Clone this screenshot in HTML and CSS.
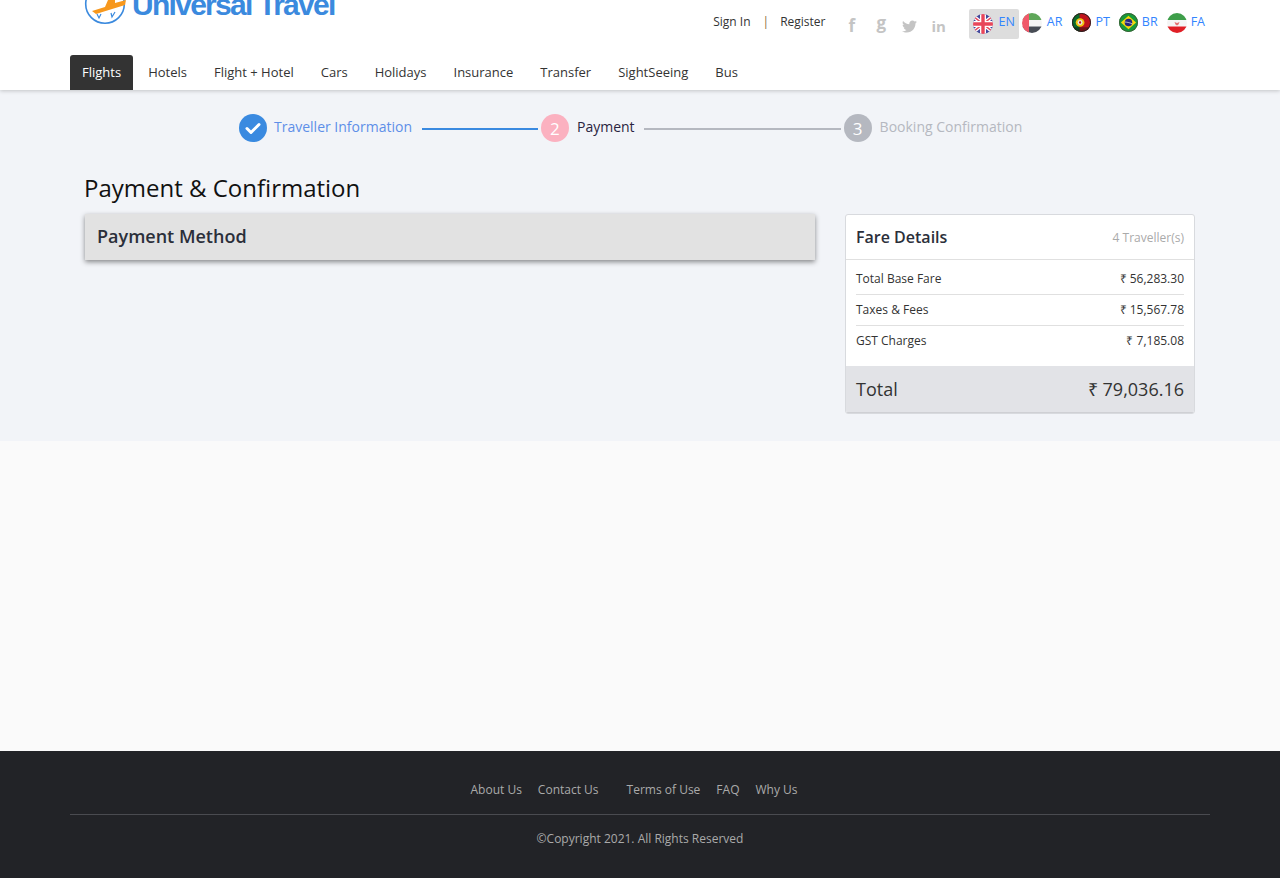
FILE: index.html
```html
<!DOCTYPE html>
<html lang="en">
<head>
<meta charset="utf-8">
<title>Universal Travel - Payment</title>
<link rel="stylesheet" href="styles.css">
</head>
<body>
<header class="header">
  <div class="container">
    <div class="top-row">
      <a class="logo" href="#">
        <svg class="logo-mark" width="42" height="42" viewBox="0 0 42 42">
          <circle cx="21" cy="21" r="19.3" fill="#fff" stroke="#3b8ade" stroke-width="1.6"/>
          <path d="M13 31l2 4 2-4M27 30l1 4 3-5M7 13l5-5M16 7l4-3" fill="none" stroke="#3b8ade" stroke-width="1.2"/>
          <path d="M8 28l13-4 3-7h7v3l11-3-1 5-29 9z" fill="#f7981d"/>
        </svg>
        <span class="logo-text">Universal Travel</span>
      </a>
      <div class="top-right">
        <div class="auth">
          <a href="#">Sign In</a>
          <span class="sep">|</span>
          <a href="#">Register</a>
        </div>
        <div class="social">
          <span class="soc soc-f">f</span>
          <span class="soc soc-g">g</span>
          <svg class="soc-tw" width="15" height="15" viewBox="0 0 512 512"><path fill="#c4c4c4" d="M459.37 151.716c.325 4.548.325 9.097.325 13.645 0 138.72-105.583 298.558-298.558 298.558-59.452 0-114.68-17.219-161.137-47.106 8.447.974 16.568 1.299 25.34 1.299 49.055 0 94.213-16.568 130.274-44.832-46.132-.975-84.792-31.188-98.112-72.772 6.498.974 12.995 1.624 19.818 1.624 9.421 0 18.843-1.3 27.614-3.573-48.081-9.747-84.143-51.98-84.143-102.985v-1.299c13.969 7.797 30.214 12.67 47.431 13.319-28.264-18.843-46.781-51.005-46.781-87.391 0-19.492 5.197-37.36 14.294-52.954 51.655 63.675 129.3 105.258 216.365 109.807-1.624-7.797-2.599-15.918-2.599-24.04 0-57.828 46.782-104.934 104.934-104.934 30.213 0 57.502 12.67 76.67 33.137 23.715-4.548 46.456-13.32 66.599-25.34-7.798 24.366-24.366 44.833-46.132 57.827 21.117-2.273 41.584-8.122 60.426-16.243-14.292 20.791-32.161 39.308-52.628 54.253z"/></svg>
          <span class="soc soc-in">in</span>
        </div>
        <div class="langs">
          <a class="lang lang-active" href="#">
            <svg class="flag flag-en" viewBox="0 0 20 20"><clipPath id="c1"><circle cx="10" cy="10" r="10"/></clipPath><g clip-path="url(#c1)"><rect width="20" height="20" fill="#41479b"/><path d="M0 2l20 16M20 2L0 18" stroke="#fff" stroke-width="4"/><path d="M0 2l20 16M20 2L0 18" stroke="#e8465a" stroke-width="1.4"/><path d="M10 0v20M0 10h20" stroke="#fff" stroke-width="6"/><path d="M10 0v20M0 10h20" stroke="#e8465a" stroke-width="3.4"/></g></svg>
            <span>EN</span>
          </a>
          <a class="lang" href="#">
            <svg class="flag" viewBox="0 0 20 20"><clipPath id="c2"><circle cx="10" cy="10" r="10"/></clipPath><g clip-path="url(#c2)"><rect width="20" height="7" fill="#5fa75a"/><rect y="7" width="20" height="6.5" fill="#f5f5f5"/><rect y="13.5" width="20" height="6.5" fill="#474c55"/><rect width="7" height="20" fill="#f0596a"/></g></svg>
            <span>AR</span>
          </a>
          <a class="lang lang-pt" href="#">
            <svg class="flag flag-sm" viewBox="0 0 20 20"><clipPath id="c3"><circle cx="10" cy="10" r="10"/></clipPath><g clip-path="url(#c3)"><rect width="20" height="20" fill="#c0141c"/><path d="M0 0h8v20H0z" fill="#0b6b2a"/><rect y="15" width="20" height="5" fill="#111" opacity=".45"/><circle cx="8.500" cy="10" r="4.600" fill="#f1c40f"/><circle cx="8.500" cy="10" r="2.600" fill="#e8e8e8"/><circle cx="8.500" cy="10" r="1.200" fill="#c0141c"/></g><circle cx="10" cy="10" r="9.500" fill="none" stroke="#222" stroke-width="1"/></svg>
            <span>PT</span>
          </a>
          <a class="lang" href="#">
            <svg class="flag flag-sm" viewBox="0 0 20 20"><clipPath id="c4"><circle cx="10" cy="10" r="10"/></clipPath><g clip-path="url(#c4)"><rect width="20" height="20" fill="#169b3a"/><path d="M10 3l8 7-8 7-8-7z" fill="#f5d90a"/><circle cx="10" cy="10" r="4" fill="#27287e"/><path d="M6 9.500c3 0 6 1 8 2" stroke="#ddd" stroke-width=".8" fill="none"/></g><circle cx="10" cy="10" r="9.500" fill="none" stroke="#3d5c36" stroke-width="1"/></svg>
            <span>BR</span>
          </a>
          <a class="lang lang-fa" href="#">
            <svg class="flag" viewBox="0 0 20 20"><clipPath id="c5"><circle cx="10" cy="10" r="10"/></clipPath><g clip-path="url(#c5)"><rect width="20" height="7" fill="#3e9e4a"/><rect y="7" width="20" height="6.500" fill="#f5f5f5"/><rect y="13.500" width="20" height="6.500" fill="#e01f26"/><path d="M7.500 9l2.500 1 2.500-1-1 2.500-1.500 1-1.500-1z" fill="#e57373"/></g></svg>
            <span>FA</span>
          </a>
        </div>
      </div>
    </div>
    <nav class="nav">
      <a class="tab tab-active" href="#">Flights</a>
      <a class="tab" href="#">Hotels</a>
      <a class="tab" href="#">Flight + Hotel</a>
      <a class="tab" href="#">Cars</a>
      <a class="tab" href="#">Holidays</a>
      <a class="tab" href="#">Insurance</a>
      <a class="tab" href="#">Transfer</a>
      <a class="tab" href="#">SightSeeing</a>
      <a class="tab" href="#">Bus</a>
    </nav>
  </div>
</header>

<main class="main">
  <div class="container">
    <ol class="steps">
      <li class="step step-done">
        <span class="step-num">
          <svg width="16" height="13" viewBox="0 0 16 13"><path d="M2 6.500l4 4 8-8" fill="none" stroke="#fff" stroke-width="3" stroke-linecap="round" stroke-linejoin="round"/></svg>
        </span>
        <span class="step-label">Traveller Information</span>
      </li>
      <li class="step-line step-line-done"></li>
      <li class="step step-current">
        <span class="step-num">2</span>
        <span class="step-label">Payment</span>
      </li>
      <li class="step-line"></li>
      <li class="step step-next">
        <span class="step-num">3</span>
        <span class="step-label">Booking Confirmation</span>
      </li>
    </ol>
    <div class="content">
      <h1 class="page-title">Payment &amp; Confirmation</h1>
      <div class="columns">
        <section class="pay-panel">
          <h2 class="pay-title">Payment Method</h2>
        </section>
        <aside class="fare">
          <div class="fare-head">
            <h3 class="fare-title">Fare Details</h3>
            <span class="fare-count">4 Traveller(s)</span>
          </div>
          <ul class="fare-rows">
            <li class="fare-row"><span>Total Base Fare</span><span>₹ 56,283.30</span></li>
            <li class="fare-row"><span>Taxes &amp; Fees</span><span>₹ 15,567.78</span></li>
            <li class="fare-row"><span>GST Charges</span><span>₹ 7,185.08</span></li>
          </ul>
          <div class="fare-total"><span>Total</span><span>₹ 79,036.16</span></div>
        </aside>
      </div>
    </div>
  </div>
</main>

<div class="blank"></div>

<footer class="footer">
  <div class="container">
    <ul class="foot-links">
      <li><a href="#">About Us</a></li>
      <li class="foot-gap-after"><a href="#">Contact Us</a></li>
      <li><a href="#">Terms of Use</a></li>
      <li><a href="#">FAQ</a></li>
      <li class="foot-gap-after"><a href="#">Why Us</a></li>
    </ul>
    <p class="copyright">©Copyright 2021. All Rights Reserved</p>
  </div>
</footer>
</body>
</html>
```

FILE: styles.css
```css
* { box-sizing: border-box; }
html, body { margin: 0; padding: 0; }
body {
  font-family: "Open Sans", "Liberation Sans", sans-serif;
  font-size: 13px;
  color: #333;
  background: #fafafa;
}
a { text-decoration: none; color: inherit; }
ul, ol { list-style: none; margin: 0; padding: 0; }
h1, h2, h3, p { margin: 0; font-weight: normal; }

.container { width: 1140px; margin: 0 auto; }

/* Header */
.header {
  height: 90px;
  background: #fff;
  box-shadow: 0 1px 4px rgba(0, 0, 0, .2);
  position: relative;
  overflow: hidden;
}
.top-row {
  height: 55px;
  display: flex;
  justify-content: space-between;
  padding-left: 15px;
}
.logo {
  display: flex;
  align-items: flex-start;
  height: 42px;
  margin-top: -17px;
}
.logo-mark { flex: none; margin-left: -1px; }
.logo-text {
  font-family: "Liberation Sans", Arial, sans-serif;
  font-weight: bold;
  font-size: 30px;
  line-height: 34px;
  letter-spacing: -1.72px;
  margin-left: 6px;
  margin-top: 5px;
  color: #3b8ade;
  white-space: nowrap;
}
.top-right {
  display: flex;
  align-items: flex-start;
  padding-top: 9px;
  padding-right: 5px;
}
.auth {
  display: flex;
  font-size: 12px;
  line-height: 26px;
  color: #333;
  margin-right: 21px;
}
.sep { margin: 0 11px 0 12px; color: #8a6d3b; }
.social {
  display: flex;
  align-items: center;
  width: 123px;
  height: 34px;
  color: #c4c4c4;
  font-weight: bold;
  font-size: 17px;
}
.soc { display: block; line-height: 34px; }
.soc-f { width: 28px; padding-left: 2px; }
.soc-g { width: 28px; padding-left: 2px; margin-top: -6px; }
.soc-tw { flex: none; margin: 0 14px 0 0; }
.soc-in { font-size: 15px; }
.langs { display: flex; font-size: 12.5px; color: #3385ff; }
.lang {
  display: flex;
  align-items: flex-start;
  height: 30px;
  padding-top: 4px;
  margin-left: 9px;
}
.lang span { margin-left: 5px; line-height: 18px; }
.lang-active {
  background: #ddd;
  margin-left: 0;
  margin-right: -6px;
  padding-left: 4px;
  padding-right: 4px;
  border-radius: 2px;
}
.lang-pt { margin-left: 10px; }
.lang-fa span { margin-left: 4px; }
.flag { width: 20px; height: 20px; flex: none; }
.flag-en { margin-top: 1px; }
.flag-sm { width: 19px; height: 19px; }
.flag-sm + span { margin-left: 4px; }

.nav { display: flex; gap: 3px; height: 35px; }
.tab {
  padding: 0 12px;
  line-height: 35px;
  font-size: 13px;
  color: #333;
  border-radius: 3px 3px 0 0;
}
.tab-active { background: #333; color: #fff; }

/* Main */
.main { height: 351px; background: #f2f4f8; }
.main .container { padding-top: 24px; }
.steps {
  display: flex;
  align-items: center;
  height: 28px;
  padding-left: 169px;
}
.step { display: flex; align-items: center; flex: none; }
.step-num {
  width: 28px;
  height: 28px;
  border-radius: 50%;
  display: flex;
  align-items: center;
  justify-content: center;
  color: #fff;
  font-size: 17px;
}
.step-label { margin-left: 7px; font-size: 14px; line-height: 24px; margin-bottom: 2px; }
.step-current .step-label, .step-next .step-label { margin-left: 8px; }
.step-line { height: 2px; background: #b5b8c0; margin: 2px 3px 0 10px; flex: none; width: 197px; }
.step-line-done { background: #3a8ae0; width: 116px; }
.step-current + .step-line { margin-left: 9px; }
.step-done .step-num { background: #3a8ae0; }
.step-done .step-label { color: #5e8fe8; }
.step-current .step-num { background: #fbb1c0; }
.step-current .step-label { color: #2a2440; }
.step-next .step-num { background: #b5b8c0; }
.step-next .step-label { color: #b5b8c0; }

.content { padding: 0 15px; }
.page-title {
  font-size: 24px;
  line-height: 32px;
  color: #111;
  margin-top: 30px;
  margin-left: -1px;
}
.columns {
  display: grid;
  grid-template-columns: 730px 350px;
  column-gap: 30px;
  align-items: start;
  margin-top: 10px;
}
.pay-panel {
  height: 46px;
  background: #e2e2e2;
  box-shadow: 0 2px 5px rgba(0, 0, 0, .45);
  padding: 0 12px;
}
.pay-title {
  font-size: 18px;
  font-weight: 600;
  line-height: 45px;
  color: #2b2f3a;
}
.fare {
  height: 200px;
  background: #fff;
  border: 1px solid #d8dade;
  border-radius: 3px;
  overflow: hidden;
}
.fare-head {
  display: flex;
  justify-content: space-between;
  align-items: center;
  height: 45px;
  padding: 0 10px;
  border-bottom: 1px solid #e0e0e0;
}
.fare-title { font-size: 16px; font-weight: 600; color: #2b2f3a; }
.fare-count { font-size: 12px; color: #aaa; }
.fare-rows { padding: 4px 10px 0; height: 106px; }
.fare-row {
  display: flex;
  justify-content: space-between;
  height: 31px;
  line-height: 29px;
  font-size: 12px;
  color: #333;
  border-bottom: 1px solid #e0e0e0;
}
.fare-row:last-child { border-bottom: 0; }
.fare-total {
  display: flex;
  justify-content: space-between;
  align-items: center;
  height: 47px;
  padding: 0 10px;
  background: #e2e3e7;
  border-bottom: 1px solid #cfd0d4;
  font-size: 18px;
  color: #333;
}

.blank { height: 310px; background: #fafafa; }

/* Footer */
.footer { height: 127px; background: #222327; font-size: 12px; color: #aaa; }
.foot-links {
  display: flex;
  justify-content: center;
  height: 64px;
  padding-top: 30px;
  line-height: 17px;
  border-bottom: 1px solid #4a4b50;
}
.foot-links li { padding: 0 8px; }
.foot-links .foot-gap-after { padding-right: 20px; }
.copyright { text-align: center; line-height: 17px; margin-top: 15px; }
```
